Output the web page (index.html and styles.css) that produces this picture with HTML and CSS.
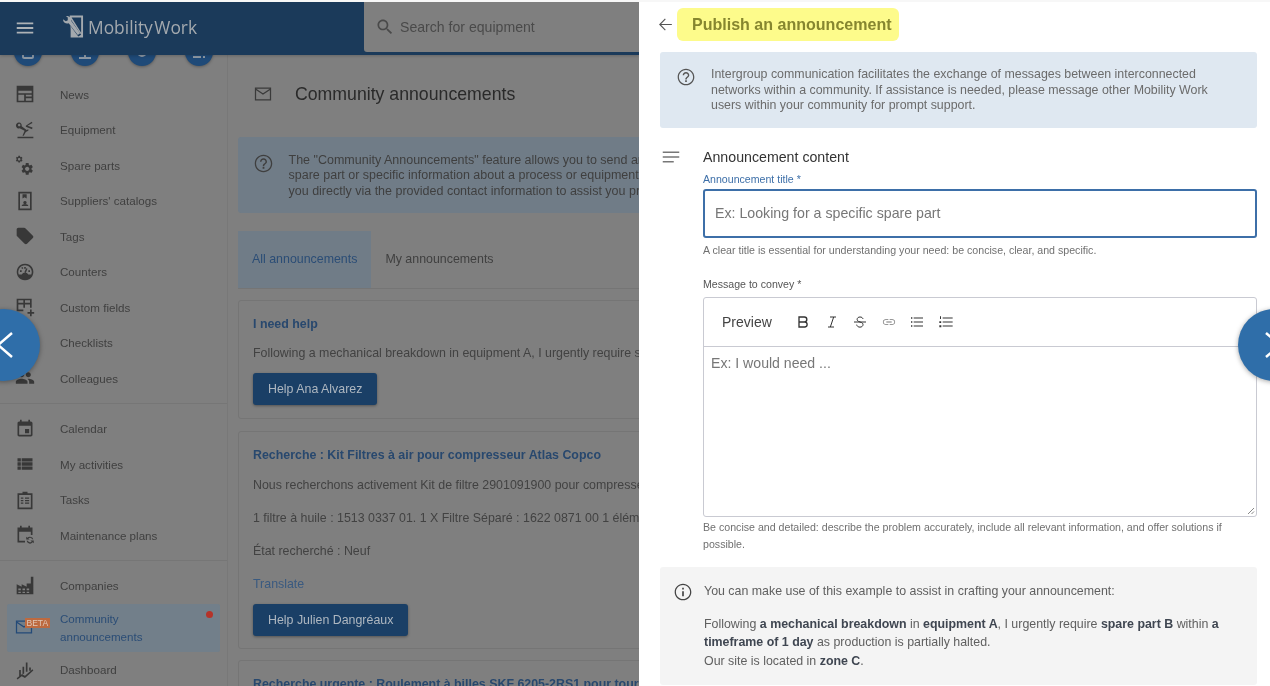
FILE: index.html
```html
<!DOCTYPE html>
<html lang="en">
<head>
<meta charset="utf-8">
<title>Publish an announcement</title>
<link rel="stylesheet" href="styles.css">
</head>
<body>
<div class="app">
  <div class="backdrop">
    <header class="topbar">
      <svg class="ic menu-ic" viewBox="0 0 24 24"><path d="M3 18h18v-2H3v2zm0-5h18v-2H3v2zm0-7v2h18V6H3z"/></svg>
      <svg class="logo-ic" viewBox="0 0 22 24"><path d="M7 0h14v23H8v-9z"/><path class="logo-cut" d="M9 2h10v16zM8 4l11 16-3 2L5 7z"/><path d="M0 4l3 2 2-1 0-3-2-1.500C5 .5 8 1 8.500 3.500c.3 1 0 1.500 0 2l9.500 13-2.500 2L6 8c-2 1-6 0-6-4z"/></svg>
      <span class="logo-text">Mobility Work</span>
      <div class="search">
        <svg class="ic search-ic" viewBox="0 0 24 24"><path d="M15.500 14h-.79l-.28-.27C15.410 12.590 16 11.110 16 9.500 16 5.910 13.090 3 9.500 3S3 5.910 3 9.500 5.910 16 9.500 16c1.610 0 3.090-.59 4.230-1.570l.27.28v.79l5 4.990L20.490 19l-4.990-5zm-6 0C7.010 14 5 11.990 5 9.500S7.010 5 9.500 5 14 7.010 14 9.500 11.990 14 9.500 14z"/></svg>
        <span>Search for equipment</span>
      </div>
    </header>
    <div class="body-row">
      <aside class="sidebar">
        <div class="quick">
          <span class="dot"><svg viewBox="0 0 16 16"><rect x="3" y="2" width="10" height="12" rx="1.500"/></svg></span>
          <span class="dot"><svg viewBox="0 0 16 16"><path d="M2 14h12M8 4v10"/></svg></span>
          <span class="dot"><svg viewBox="0 0 16 16"><circle cx="8" cy="8" r="4"/></svg></span>
          <span class="dot"><svg viewBox="0 0 16 16"><path d="M2 13h8M12 13h2M12 9h2"/></svg></span>
        </div>
        <nav class="nav">
          <a class="nav-item"><svg class="ic" viewBox="0 0 24 24"><path d="M2 2h20v20H2zM4 8v3h16V8zM4 13v7h7v-7zM13 13v2h7v-2zM13 17v3h7v-3z" fill-rule="evenodd"/></svg><span>News</span></a>
          <a class="nav-item"><svg class="ic" viewBox="0 0 24 24"><path d="M3 20h19v2H3zM9 19l2.500-6L5.500 10a3.500 3.500 0 1 1 2.500-2.500l6 4.500 2-1v2l-3 1.500-2.500 4.500zM5 4.500a1.500 1.500 0 1 0 .1 0zM13 7l7-5 1 1.500-6 3.500 6 2-.5 2-7.500-3z" fill-rule="evenodd"/></svg><span>Equipment</span></a>
          <a class="nav-item"><svg class="ic" viewBox="0 0 24 24"><use href="#gear" transform="translate(6 8) scale(.72)"/><use href="#gear" transform="translate(0 0) scale(.42)"/></svg><span>Spare parts</span></a>
          <a class="nav-item"><svg class="ic" viewBox="0 0 24 24"><path d="M4 1h16v22H4zM6 3v18h12V3zM9 4h5v5l-2.500-1.500L9 9zM12 12a2 2 0 1 1-.1 0zM8 18c0-1.500 2-2.500 4-2.500s4 1 4 2.500z" fill-rule="evenodd"/></svg><span>Suppliers' catalogs</span></a>
          <a class="nav-item"><svg class="ic" viewBox="0 0 24 24"><path d="M21.410 11.580l-9-9C12.050 2.220 11.550 2 11 2H4c-1.100 0-2 .9-2 2v7c0 .55.22 1.050.59 1.420l9 9c.36.36.86.58 1.410.58.55 0 1.050-.22 1.410-.59l7-7c.37-.36.59-.86.59-1.410 0-.55-.23-1.060-.59-1.420z"/></svg><span>Tags</span></a>
          <a class="nav-item"><svg class="ic" viewBox="0 0 24 24"><path d="M12 2a10 10 0 1 0 .1 0zM12 4a8 8 0 0 1 7.500 11H16c-1-1.500-2.500-2-4-2s-3 .5-4 2H4.500A8 8 0 0 1 12 4zM11 6h2v2h-2zM6 10h2v2H6zM16 10h2v2h-2zM13.500 7.500l1.500.7-2 4.800-1.800-.7zM7.500 7l1.500-1 1 1.500-1.500 1z" fill-rule="evenodd"/></svg><span>Counters</span></a>
          <a class="nav-item"><svg class="ic" viewBox="0 0 24 24"><path d="M2 2h18v11h-2V9h-6v4h-2V9H4v6h6v2H2zM4 4v3h6V4zM12 4v3h6V4zM18 15h2v3h3v2h-3v3h-2v-3h-3v-2h3z" fill-rule="evenodd"/></svg><span>Custom fields</span></a>
          <a class="nav-item"><svg class="ic" viewBox="0 0 24 24"><path d="M3 5h18v2H3zM3 11h18v2H3zM3 17h18v2H3z"/></svg><span>Checklists</span></a>
          <a class="nav-item"><svg class="ic" viewBox="0 0 24 24"><path d="M16 11c1.660 0 2.990-1.340 2.990-3S17.660 5 16 5c-1.660 0-3 1.340-3 3s1.340 3 3 3zm-8 0c1.660 0 2.990-1.340 2.990-3S9.660 5 8 5C6.340 5 5 6.340 5 8s1.340 3 3 3zm0 2c-2.330 0-7 1.170-7 3.500V19h14v-2.500c0-2.330-4.670-3.500-7-3.500zm8 0c-.29 0-.62.02-.97.05 1.160.84 1.970 1.970 1.970 3.450V19h6v-2.500c0-2.330-4.670-3.500-7-3.500z"/></svg><span>Colleagues</span></a>
        </nav>
        <nav class="nav ruled">
          <a class="nav-item"><svg class="ic" viewBox="0 0 24 24"><path d="M17 12h-5v5h5v-5zM16 1v2H8V1H6v2H5c-1.110 0-1.990.9-1.990 2L3 19c0 1.100.89 2 2 2h14c1.100 0 2-.9 2-2V5c0-1.100-.9-2-2-2h-1V1h-2zm3 18H5V8h14v11z"/></svg><span>Calendar</span></a>
          <a class="nav-item"><svg class="ic" viewBox="0 0 24 24"><path d="M3 14h4v-4H3v4zm0 5h4v-4H3v4zM3 9h4V5H3v4zm5 5h13v-4H8v4zm0 5h13v-4H8v4zM8 5v4h13V5H8z"/></svg><span>My activities</span></a>
          <a class="nav-item"><svg class="ic" viewBox="0 0 24 24"><path d="M9 2h6v2h6v19H3V4h6zM5 6v15h14V6zM7 9h3v1.500H7zM12 9h5v1.500h-5zM7 15h3v1.500H7zM12 15h5v1.500h-5zM7 12h3v1.500H7zM12 12h5v1.500h-5z" fill-rule="evenodd"/></svg><span>Tasks</span></a>
          <a class="nav-item"><svg class="ic" viewBox="0 0 24 24"><path d="M6 1h2v2h8V1h2v2h3v9h-2V8H5v11h7v2H3V3h3zM18 14a4 4 0 0 1 4 3h-1.500a2.500 2.500 0 0 0-4.500-.7l1.500 1.200h-4v-3.500l1.400 1.200A4 4 0 0 1 18 14zM14 19h1.500a2.500 2.500 0 0 0 4.500.7l-1.500-1.200h4V22l-1.400-1.200A4 4 0 0 1 14 19z"/></svg><span>Maintenance plans</span></a>
        </nav>
        <nav class="nav ruled">
          <a class="nav-item"><svg class="ic" viewBox="0 0 24 24"><path d="M19 1h3v21H2V10l6 3V10l6 3V9h5zM4 15v2h3v-2zM9 15v2h3v-2zM14 15v2h3v-2zM4 19v1.500h3V19zM9 19v1.500h3V19zM14 19v1.500h3V19z" fill-rule="evenodd"/></svg><span>Companies</span></a>
          <a class="nav-item active"><span class="beta-wrap"><svg class="ic mail" viewBox="0 0 24 24"><path d="M3 5h18v14H3zM3 6l9 6 9-6"/></svg><b class="beta">BETA</b></span><span>Community announcements</span><i class="red-dot"></i></a>
          <a class="nav-item"><svg class="ic" viewBox="0 0 24 24"><path d="M5 12h2v7l-2 2zM9 8h2v8l-2 2zM13 3h2v11l-2 0zM17 9h2v4h-2zM2 22l6-5 4 2 9-8 1 1.500-10 9-4-2-5 4z"/></svg><span>Dashboard</span></a>
        </nav>
      </aside>
      <main class="content">
        <div class="page-title">
          <svg class="ic mail" viewBox="0 0 24 24"><path d="M3 5h18v14H3zM3 6l9 6 9-6"/></svg>
          <h1>Community announcements</h1>
        </div>
        <div class="notice">
          <svg class="ic" viewBox="0 0 24 24"><use href="#help"/></svg>
          <p>The "Community Announcements" feature allows you to send an urgent request for a<br>spare part or specific information about a process or equipment, and other users can reach<br>you directly via the provided contact information to assist you promptly and efficiently.</p>
        </div>
        <div class="tabs"><span class="tab on">All announcements</span><span class="tab">My announcements</span></div>
        <article class="card">
          <h2>I need help</h2>
          <p>Following a mechanical breakdown in equipment A, I urgently require spare part B within a timeframe of 1 day.</p>
          <button class="help-btn">Help Ana Alvarez</button>
        </article>
        <article class="card tall">
          <h2>Recherche : Kit Filtres à air pour compresseur Atlas Copco</h2>
          <p>Nous recherchons activement Kit de filtre 2901091900 pour compresseur Atlas Copco GA 30.</p>
          <p>1 filtre à huile : 1513 0337 01. 1 X Filtre Séparé : 1622 0871 00 1 élément de filtre à air.</p>
          <p>État recherché : Neuf</p>
          <p class="link">Translate</p>
          <button class="help-btn">Help Julien Dangréaux</button>
        </article>
        <article class="card">
          <h2>Recherche urgente : Roulement à billes SKF 6205-2RS1 pour tour CNC</h2>
        </article>
      </main>
    </div>
  </div>

  <section class="panel">
    <div class="panel-head">
      <svg class="back-ic" viewBox="0 0 24 24"><path d="M20 11.300H6.500l5.800-5.800L11.300 4.500 3.800 12l7.500 7.500 1-1-5.800-5.800H20z"/></svg>
      <h2 class="mark">Publish an announcement</h2>
    </div>
    <div class="panel-info">
      <svg class="ic" viewBox="0 0 24 24"><use href="#help"/></svg>
      <p>Intergroup communication facilitates the exchange of messages between interconnected<br>networks within a community. If assistance is needed, please message other Mobility Work<br>users within your community for prompt support.</p>
    </div>
    <div class="section-title">
      <svg class="notes-ic" viewBox="0 0 24 24"><path d="M3 18h12v-1.600H3v1.600zM3 6v1.600h18V6H3zm0 6.800h18v-1.600H3v1.600z"/></svg>
      <span>Announcement content</span>
    </div>
    <form class="form">
      <label class="label-blue">Announcement title *</label>
      <div class="input">Ex: Looking for a specific spare part</div>
      <p class="hint first">A clear title is essential for understanding your need: be concise, clear, and specific.</p>
      <label class="label">Message to convey *</label>
      <div class="editor">
        <div class="toolbar">
          <span class="preview">Preview</span>
          <svg class="tool line" viewBox="0 0 24 24"><path d="M6 4.500h8a3.700 3.700 0 0 1 0 7.500H6zM6 12h9a3.800 3.800 0 0 1 0 7.500H6z"/></svg>
          <svg class="tool line thin" viewBox="0 0 24 24"><path d="M9 4.500h9M6 19.500h9M14.500 4.500L9.500 19.500"/></svg>
          <svg class="tool line thin" viewBox="0 0 24 24"><path d="M3 12h18M16.500 7.500C16 5.500 14.500 4.500 12 4.500 9.500 4.500 7.700 6 7.700 8c0 1.700 1 3 4.300 4 3.300 1 4.500 2 4.500 4 0 2.200-2 3.700-4.500 3.700-2.700 0-4.500-1.300-5-3.700"/></svg>
          <svg class="tool grey" viewBox="0 0 24 24"><path d="M3.900 12c0-1.710 1.390-3.100 3.100-3.100h4V7.800H7c-2.300 0-4.200 1.900-4.200 4.200s1.900 4.200 4.200 4.200h4v-1.100H7c-1.710 0-3.100-1.390-3.100-3.100zM8 12.600h8v-1.200H8v1.200zm9-4.800h-4v1.100h4c1.710 0 3.100 1.390 3.100 3.100s-1.390 3.100-3.100 3.100h-4v1.100h4c2.300 0 4.200-1.900 4.200-4.200s-1.900-4.200-4.200-4.200z"/></svg>
          <svg class="tool" viewBox="0 0 24 24"><path d="M3 5h2v2H3zM3 11h2v2H3zM3 17h2v2H3zM7 5.300h14v1.400H7zM7 11.300h14v1.400H7zM7 17.300h14v1.400H7z"/></svg>
          <svg class="tool" viewBox="0 0 24 24"><path d="M3 3.500h1.500v4H3zM2 11h2.800v2.500H2zM2 17h3v3H2zM7 5.300h15v1.400H7zM7 11.300h15v1.400H7zM7 17.300h15v1.400H7z"/></svg>
        </div>
        <div class="textarea">Ex: I would need ...
          <svg class="grip" viewBox="0 0 8 8"><path d="M7 1L1 7M7 4.500L4.500 7" /></svg>
        </div>
      </div>
      <p class="hint">Be concise and detailed: describe the problem accurately, include all relevant information, and offer solutions if possible.</p>
    </form>
    <div class="example">
      <svg class="ic" viewBox="0 0 24 24"><path d="M11 7h2v2h-2zm0 4h2v6h-2zm1-9C6.480 2 2 6.480 2 12s4.480 10 10 10 10-4.480 10-10S17.520 2 12 2zm0 18.500c-4.690 0-8.500-3.810-8.500-8.500S7.310 3.500 12 3.500s8.500 3.810 8.500 8.500-3.810 8.500-8.500 8.500z"/></svg>
      <div class="example-text">
        <p>You can make use of this example to assist in crafting your announcement:</p>
        <p>Following <b>a mechanical breakdown</b> in <b>equipment A</b>, I urgently require <b>spare part B</b> within <b>a timeframe of 1 day</b> as production is partially halted.<br>Our site is located in <b>zone C</b>.</p>
      </div>
    </div>
  </section>

  <button class="arrow arrow-left" aria-label="Previous"><svg viewBox="0 0 72 72"><path d="M44 24L30 36l14 12"/></svg></button>
  <button class="arrow arrow-right" aria-label="Next"><svg viewBox="0 0 72 72"><path d="M28 24l14 12-14 12"/></svg></button>
</div>

<svg class="defs" aria-hidden="true">
  <defs>
    <path id="gear" d="M19.140 12.940c.04-.3.06-.61.06-.94 0-.32-.02-.64-.07-.94l2.030-1.580c.18-.14.23-.41.12-.61l-1.920-3.320c-.12-.22-.37-.29-.59-.22l-2.390.96c-.5-.38-1.030-.7-1.620-.94l-.36-2.540c-.04-.24-.24-.41-.48-.41h-3.840c-.24 0-.43.17-.47.41l-.36 2.540c-.59.24-1.130.57-1.620.94l-2.390-.96c-.22-.08-.47 0-.59.22L2.740 8.870c-.12.21-.08.47.12.61l2.030 1.580c-.05.3-.09.63-.09.94s.02.64.07.94l-2.030 1.580c-.18.14-.23.41-.12.61l1.920 3.320c.12.22.37.29.59.22l2.390-.96c.5.38 1.030.7 1.620.94l.36 2.540c.05.24.24.41.48.41h3.840c.24 0 .44-.17.47-.41l.36-2.540c.59-.24 1.130-.56 1.620-.94l2.390.96c.22.08.47 0 .59-.22l1.920-3.320c.12-.22.07-.47-.12-.61l-2.010-1.580zM12 15.600c-1.980 0-3.600-1.620-3.600-3.600s1.620-3.600 3.600-3.600 3.600 1.620 3.600 3.600-1.620 3.600-3.600 3.600z"/>
    <path id="help" d="M11 18h2v-2h-2v2zm1-16C6.480 2 2 6.480 2 12s4.480 10 10 10 10-4.480 10-10S17.520 2 12 2zm0 18.500c-4.690 0-8.500-3.810-8.500-8.500S7.310 3.500 12 3.500s8.500 3.810 8.500 8.500-3.810 8.500-8.500 8.500zM12 6c-2.210 0-4 1.790-4 4h1.700c0-1.270 1.030-2.300 2.300-2.300s2.300 1.030 2.300 2.300c0 2-3.150 1.900-3.150 5h1.700c0-2.250 3.150-2.500 3.150-5 0-2.210-1.790-4-4-4z"/>
  </defs>
</svg>
</body>
</html>
```

FILE: styles.css
```css
* { box-sizing: border-box; }
html, body { margin: 0; height: 100%; }
body {
  overflow: hidden;
  background: #f7f7f7;
  font-family: "Liberation Sans", Arial, sans-serif;
  color: #333;
}
p, h1, h2 { margin: 0; }
.defs { display: none; }

.app {
  position: relative;
  display: flex;
  width: 1270px;
  height: 686px;
  padding-top: 2px;
  overflow: hidden;
  filter: blur(.35px);
}
.ic { width: 20px; height: 20px; flex: none; fill: currentColor; }
.nav-item .ic.mail, .page-title .ic.mail { fill: none; stroke: currentColor; stroke-width: 1.500; }

/* dimmed page behind the drawer */
.backdrop {
  display: flex;
  flex-direction: column;
  width: 639px;
  flex: none;
  overflow: hidden;
  background: #7f7f7f;
  color: #404040;
}
.topbar {
  position: relative;
  z-index: 2;
  display: flex;
  align-items: flex-start;
  height: 53px;
  flex: none;
  padding-left: 14px;
  background: #1b3a5a;
  color: #aeb2b6;
  box-shadow: 0 1px 3px rgba(0, 0, 0, .2);
}
.menu-ic { width: 22px; height: 22px; margin-top: 15px; }
.logo-ic { width: 21px; height: 24px; margin: 13px 0 0 27px; fill: #a4a9ae; flex: none; }
.logo-cut { fill: #1b3a5a; }
.logo-text { margin: 11px 0 0 4px; font-family: "Open Sans", sans-serif; font-size: 17.400px; line-height: 28px; word-spacing: -3px; white-space: nowrap; color: #a4a9ae; }
.search {
  display: flex;
  align-items: center;
  gap: 5px;
  margin-left: auto;
  width: 275px;
  height: 50px;
  padding-left: 11px;
  background: #7f7f7f;
  border-radius: 0 0 0 3px;
  font-size: 14.100px;
  color: #4a4a4a;
}
.body-row { display: flex; flex: 1; min-height: 0; }

.sidebar {
  width: 228px;
  flex: none;
  border-right: 1px solid #787878;
}
.quick {
  display: flex;
  gap: 29px;
  height: 21.500px;
  padding-left: 14px;
}
.dot {
  display: flex;
  align-items: center;
  justify-content: center;
  width: 28px;
  height: 28px;
  margin-top: -17px;
  border-radius: 50%;
  background: #1f4a78;
  box-shadow: 0 1px 3px rgba(0, 0, 0, .3);
}
.dot svg { width: 16px; height: 16px; fill: none; stroke: #8e99a5; stroke-width: 2; }
.nav { display: flex; flex-direction: column; }
.ruled { border-top: 1px solid #767676; margin-top: 7px; padding-top: 7px; }
.nav-item {
  position: relative;
  display: flex;
  align-items: center;
  gap: 25px;
  height: 35.500px;
  padding-left: 15px;
  font-size: 11.600px;
  color: #404040;
}
.nav-item .ic { width: 20px; height: 20px; color: #383838; }
.active {
  height: 48.500px;
  margin: 0 7px;
  padding-left: 10px;
  padding-right: 24px;
  line-height: 17.500px;
  border-radius: 2px;
  background: #727f8a;
  color: #2b4d76;
}
.beta-wrap { position: relative; display: block; width: 18px; height: 20px; flex: none; }
.nav-item .beta-wrap .ic { position: absolute; left: -3px; top: -1px; color: #234a78; }
.beta {
  position: absolute;
  left: 8px;
  top: 0;
  padding: 0 1.500px;
  font-size: 8.500px;
  line-height: 10px;
  font-weight: 400;
  color: #e0c8b8;
  background: #bd6a40;
}
.red-dot {
  position: absolute;
  right: 7px;
  top: 7px;
  width: 7px;
  height: 7px;
  border-radius: 50%;
  background: #b5332a;
}

.content { flex: 1; min-width: 0; padding-left: 10px; overflow: hidden; }
.page-title {
  display: flex;
  align-items: center;
  gap: 22px;
  height: 78px;
  padding-left: 15px;
  color: #2a2a2a;
}
.page-title .ic { width: 20px; height: 20px; color: #3a3a3a; }
.page-title h1 { font-size: 17.700px; font-weight: 400; white-space: nowrap; }
.notice {
  display: flex;
  gap: 14.500px;
  width: 620px;
  height: 76px;
  margin-top: 4px;
  padding: 15.500px 0 0 15px;
  background: #707c87;
  border-radius: 3px;
  color: #3f3f3f;
}
.notice .ic { width: 21px; height: 21px; }
.notice p { font-size: 12.500px; line-height: 15.500px; white-space: nowrap; }
.tabs {
  display: flex;
  width: 620px;
  height: 58px;
  margin-top: 18px;
  border-bottom: 1px solid #757575;
  font-size: 12.400px;
  line-height: 57px;
  color: #404040;
}
.tab { padding: 0 14px; }
.tab.on { background: #707c87; color: #2b4d76; }
.card {
  width: 620px;
  height: 119px;
  margin-top: 11px;
  padding: 15.500px 14px 0;
  border: 1px solid #757575;
  border-radius: 3px;
  white-space: nowrap;
}
.card.tall { height: 218px; margin-top: 12px; margin-bottom: 11px; padding-top: 16px; }
.card.tall + .card { margin-top: 0; }
.card h2 { font-size: 12.400px; line-height: 15px; font-weight: 700; color: #28486e; }
.card p { margin-top: 12.500px; font-size: 12.400px; line-height: 18.500px; color: #424242; }
.card p + p { margin-top: 14.500px; }
.card .link { color: #3a5a80; }
.help-btn {
  display: block;
  height: 32px;
  margin-top: 10.500px;
  padding: 0 15px;
  border: 0;
  border-radius: 3px;
  background: #1a3f66;
  color: #aeb7c0;
  font: 12.400px "Liberation Sans", Arial, sans-serif;
  box-shadow: 0 1px 3px rgba(0, 0, 0, .35);
}

/* drawer */
.panel {
  flex: 1;
  min-width: 0;
  padding: 0 13px 0 21px;
  background: #fff;
  color: #333;
}
.panel-head { display: flex; align-items: center; height: 45px; margin-left: -4px; }
.back-ic { width: 19px; height: 19px; flex: none; fill: #555; }
.mark {
  height: 33px;
  margin-left: 2px;
  padding: 0 7px 0 15px;
  border-radius: 6px;
  background: #fdfb8b;
  font-size: 16.050px;
  line-height: 33px;
  font-weight: 700;
  color: #86862f;
  white-space: nowrap;
}
.panel-info {
  display: flex;
  gap: 15px;
  height: 76px;
  margin-top: 5px;
  padding: 15px 0 0 16px;
  background: #dfe8f1;
  border-radius: 3px;
  color: #555;
}
.panel-info .ic { width: 20px; height: 20px; }
.panel-info p { font-size: 12.400px; line-height: 15.500px; color: #6b6b6b; white-space: nowrap; }
.section-title {
  display: flex;
  align-items: center;
  gap: 21px;
  height: 20px;
  margin-top: 19px;
  font-size: 14.200px;
  color: #333;
}
.notes-ic { width: 22px; height: 22px; fill: #777; flex: none; }
.form { padding-left: 43px; }
.label-blue, .label { display: block; font-size: 10.600px; line-height: 13px; }
.label-blue { margin-top: 6px; color: #3d6fa8; }
.label { margin-top: 19px; color: #555; }
.input {
  height: 49px;
  margin-top: 3px;
  padding-left: 10px;
  border: 2px solid #3d6fa8;
  border-radius: 3px;
  font-size: 14.200px;
  line-height: 45px;
  color: #777;
}
.hint { margin-top: 2px; font-size: 10.630px; line-height: 17px; color: #707070; }
.hint.first { margin-top: 4px; }
.editor {
  height: 220px;
  margin-top: 6px;
  border: 1px solid #c9cad2;
  border-radius: 3px;
}
.toolbar {
  display: flex;
  align-items: center;
  height: 49px;
  padding-left: 18px;
  border-bottom: 1px solid #c9cad2;
}
.preview { width: 73px; font-size: 14px; color: #444; }
.tool { width: 16px; height: 16px; margin-right: 12.500px; fill: #333; }
.tool.grey { fill: #777; }
.tool.line { fill: none; stroke: #333; stroke-width: 2; }
.tool.thin { stroke-width: 1.500; }
.textarea { position: relative; height: 169px; padding: 8px 0 0 7px; font-size: 14.100px; color: #777; }
.grip { position: absolute; right: 1px; bottom: 1px; width: 8px; height: 8px; fill: none; stroke: #888; stroke-width: 1; }
.example {
  display: flex;
  gap: 11px;
  height: 118px;
  margin-top: 14px;
  padding: 15px 0 0 13px;
  background: #f4f4f4;
  border-radius: 3px;
  color: #555;
}
.example .ic { width: 20px; height: 20px; color: #444; }
.example-text { padding-right: 30px; font-size: 12.400px; line-height: 18.500px; color: #606060; }
.example-text p + p { margin-top: 14px; }
.example-text b { color: #3f4651; }

/* carousel arrows over the whole slide */
.arrow {
  position: absolute;
  z-index: 10;
  top: 309px;
  width: 72px;
  height: 72px;
  padding: 0;
  border: 0;
  border-radius: 50%;
  background: #2f6ea9;
  box-shadow: 0 1px 5px rgba(0, 0, 0, .35);
}
.arrow svg { display: block; width: 72px; height: 72px; fill: none; stroke: #fff; stroke-width: 2.500; }
.arrow-left { left: -32px; }
.arrow-right { left: 1238px; }
```
